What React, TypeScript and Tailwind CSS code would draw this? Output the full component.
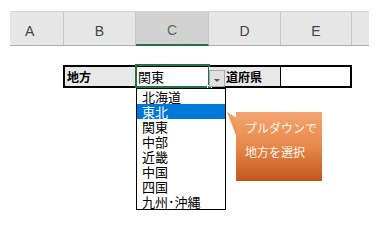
const jp = { fontFamily: '"Noto Sans CJK JP", "Noto Sans", sans-serif' }
const latin = { fontFamily: '"Liberation Sans", Arial, sans-serif' }

const columns = [
  { label: 'A', w: 'w-[54px]', align: 'justify-start pl-[15px]' },
  { label: 'B', w: 'w-[72px]', align: 'justify-center' },
  { label: 'C', w: 'w-[73px]', align: 'justify-center', active: true },
  { label: 'D', w: 'w-[72px]', align: 'justify-center' },
  { label: 'E', w: 'w-[71px]', align: 'justify-center' },
  { label: '', w: 'w-[17px]', align: 'justify-center' },
]

const regions = ['北海道', '東北', '関東', '中部', '近畿', '中国', '四国', '九州･沖縄']

export default function App() {
  return (
    <div className="relative w-[382px] h-[230px] bg-white overflow-hidden">
      {/* 列見出し */}
      <div className="ml-[10px] mt-[11px] flex h-[35px] w-[359px] bg-[#e6e6e6] border-t border-[#d6d6d6] border-b border-b-[#ababab]" style={latin}>
        {columns.map((c, i) => (
          <div
            key={i}
            className={`${c.w} ${c.align} flex items-end pb-[3px] text-[14px] ${
              i < columns.length - 1 ? 'border-r border-[#c6c6c6]' : ''
            } ${c.active ? 'bg-[#d2d2d2] text-[#4d6f5b] border-b-2 border-b-[#217346] -mb-px' : 'text-[#444]'}`}
          >
            {c.label}
          </div>
        ))}
      </div>

      {/* 入力行 */}
      <div className="ml-[63px] mt-[19px] flex h-[23px] w-[289px] border-2 border-black" style={jp}>
        <div className="w-[71px] bg-[#e8e8e8] border-r border-[#9a9a9a] flex items-center pl-[2px] text-[12px] font-bold text-black leading-none">
          地方
        </div>
        <div className="relative w-[73px] bg-white flex items-center pl-[2px] text-[13px] text-black leading-none">
          関東
          <div className="absolute -left-px -top-[3px] -right-px -bottom-[2px] border-2 border-[#217346]" />
          <div className="absolute -right-[3px] -bottom-[4px] w-[5px] h-[5px] bg-[#217346] border border-white" />
        </div>
        <div className="relative w-[72px] bg-[#e8e8e8] border-r border-black flex items-center pl-[17px] text-[12px] font-bold text-black leading-none">
          <div className="absolute left-0 top-[3px] w-[16px] h-[17px] bg-[#e1e1e1] border border-[#a8a8a8] flex items-center justify-center">
            <div className="w-0 h-0 border-l-[3px] border-r-[3px] border-t-[3px] border-l-transparent border-r-transparent border-t-[#555] mt-[3px]" />
          </div>
          道府県
        </div>
        <div className="flex-1 bg-white" />
      </div>

      {/* プルダウン一覧 */}
      <div className="absolute left-[136px] top-[88px] w-[90px] h-[122px] bg-white border border-black flex flex-col" style={jp}>
        {regions.map((r) => (
          <div
            key={r}
            className={`h-[15px] pl-[5px] text-[13px] leading-[15px] whitespace-nowrap ${
              r === '東北' ? 'bg-[#0078d7] text-white' : 'text-black'
            }`}
          >
            {r}
          </div>
        ))}
      </div>

      {/* 吹き出し */}
      <svg className="absolute left-[226px] top-[111px]" width="12" height="28" viewBox="0 0 12 28">
        <defs>
          <linearGradient id="tail" x1="0" y1="0" x2="0" y2="1">
            <stop offset="0" stopColor="#f2a46f" />
            <stop offset="1" stopColor="#e88c4f" />
          </linearGradient>
        </defs>
        <polygon points="1,1 11,7 11,27" fill="url(#tail)" />
      </svg>
      <div
        className="absolute left-[236px] top-[112px] w-[86px] h-[69px] bg-gradient-to-b from-[#f3a670] via-[#e8884a] to-[#c2561a] flex flex-col pl-[9px] pt-[10px] text-[12px] text-[#fff6ee] leading-none gap-[12px]"
        style={jp}
      >
        <span>プルダウンで</span>
        <span>地方を選択</span>
      </div>
    </div>
  )
}
